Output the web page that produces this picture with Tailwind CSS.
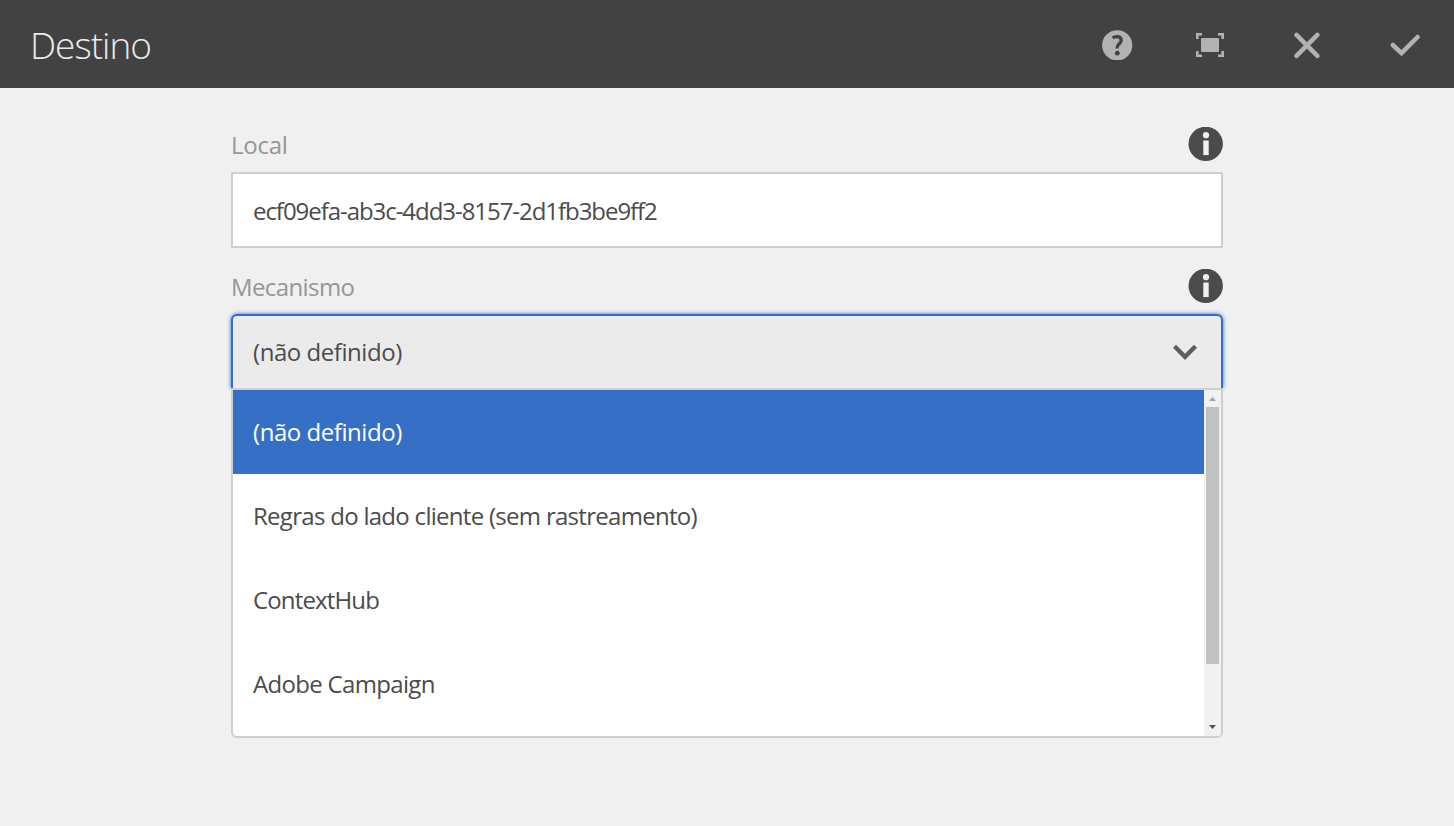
<!DOCTYPE html>
<html lang="pt-BR">
<head>
<meta charset="utf-8">
<title>Destino</title>
<script src="https://cdn.jsdelivr.net/npm/@tailwindcss/browser@4"></script>
</head>
<body class="h-[826px] overflow-hidden bg-[#f0f0f0] font-['Open_Sans',sans-serif] text-2xl text-[#4b4b4b]">
  <header class="flex h-[88px] items-center justify-between bg-[#424242] pl-[30px] pr-8">
    <h1 class="pt-0.5 text-[37px] leading-[50px] font-light tracking-[-1px] text-[#ebebeb]">Destino</h1>
    <div class="flex items-center text-[#b2b2b2]">
      <svg class="mr-[62px] h-8 w-8" viewBox="0 0 32 32"><circle cx="16.2" cy="17.3" r="15.1" fill="currentColor"/><path d="M11.6 9.9Q13.4 8.6 16 8.6Q20.2 8.6 20.2 12.3Q20.2 14.3 17.8 16.2Q16 17.6 16 20.5" fill="none" stroke="#424242" stroke-width="3.3"/><circle cx="16.3" cy="25.2" r="2.4" fill="#424242"/></svg>
      <svg class="mr-[65px] h-8 w-8" viewBox="0 0 32 32"><rect x="6" y="10" width="18" height="14" rx="1" fill="currentColor"/><path d="M7 6.3H2.3V11M23 6.3H27.7V11M2.3 23V27.7H7M27.7 23V27.7H23" fill="none" stroke="currentColor" stroke-width="2.6"/></svg>
      <svg class="mr-[66px] h-8 w-8" viewBox="0 0 32 32"><path d="M4.5 6.9L25.4 27.8M25.4 6.9L4.5 27.8" fill="none" stroke="currentColor" stroke-width="4.6" stroke-linecap="round"/></svg>
      <svg class="h-8 w-8" viewBox="0 0 32 32"><path d="M2.8 17L11.5 25.2L27.6 9" fill="none" stroke="currentColor" stroke-width="4.5" stroke-linecap="round"/></svg>
    </div>
  </header>
  <main class="mx-auto w-[992px] pt-[30px]">
    <div class="flex h-[54px] items-center justify-between text-[#969696]">
      <label class="tracking-[-0.25px]">Local</label>
      <svg class="mb-0.5 h-[35px] w-[35px]" viewBox="0 0 35 35"><circle cx="17.7" cy="16.9" r="17.2" fill="#4b4b4b"/><circle cx="18" cy="8.2" r="3.1" fill="#f0f0f0"/><path d="M15.3 13.5h5.4v14.6h-5.4z" fill="#f0f0f0"/></svg>
    </div>
    <div class="flex h-19 items-center border-2 border-[#cfcfcf] bg-white px-5 pt-0.5 tracking-[-1.05px]">ecf09efa-ab3c-4dd3-8157-2d1fb3be9ff2</div>
    <div class="flex h-[66px] items-center justify-between pt-3 text-[#969696]">
      <label class="tracking-[-0.6px]">Mecanismo</label>
      <svg class="mb-0.5 h-[35px] w-[35px]" viewBox="0 0 35 35"><circle cx="17.7" cy="16.9" r="17.2" fill="#4b4b4b"/><circle cx="18" cy="8.2" r="3.1" fill="#f0f0f0"/><path d="M15.3 13.5h5.4v14.6h-5.4z" fill="#f0f0f0"/></svg>
    </div>
    <div class="flex h-[74px] items-center justify-between rounded-t-md border-2 border-b-0 border-[#326ec8] bg-[#ebebeb] pl-5 pr-[23px] shadow-[0_0_4px_#326ec8]">
      <span class="tracking-[-0.45px]">(não definido)</span>
      <svg class="h-6 w-[26px]" viewBox="0 0 26 24"><path d="M2.5 6.3L13 16.8L23.5 6.3" fill="none" stroke="#5e5e5e" stroke-width="4.4"/></svg>
    </div>
    <div class="relative flex h-[350px] overflow-hidden rounded-b-md border-2 border-[#cfcfcf] bg-white">
      <ul class="flex-1">
        <li class="flex h-21 items-center bg-[#3670c6] px-5 tracking-[-0.45px] text-white">(não definido)</li>
        <li class="flex h-21 items-center px-5 tracking-[-0.71px]">Regras do lado cliente (sem rastreamento)</li>
        <li class="flex h-21 items-center px-5 tracking-[-0.85px]">ContextHub</li>
        <li class="flex h-21 items-center px-5 tracking-[-0.68px]">Adobe Campaign</li>
      </ul>
      <div class="flex w-[17px] flex-col items-center bg-[#f1f1f1]">
        <svg class="h-[17px] w-[17px]" viewBox="0 0 17 17"><path d="M5 11L8.5 7L12 11z" fill="#a3a3a3"/></svg>
        <div class="h-[257px] w-[13px] bg-[#c1c1c1]"></div>
        <svg class="mt-auto h-[17px] w-[17px]" viewBox="0 0 17 17"><path d="M5 6L8.5 10L12 6z" fill="#505050"/></svg>
      </div>
    </div>
  </main>
</body>
</html>
